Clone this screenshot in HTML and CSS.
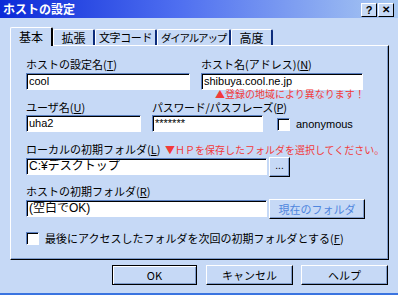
FILE: index.html
```html
<!DOCTYPE html>
<html lang="ja">
<head>
  <meta charset="UTF-8">
  <title>ホストの設定</title>
  <link rel="stylesheet" href="styles.css">
</head>
<body>
  <div class="dialog">
    <div class="titlebar">
      <span class="title">ホストの設定</span>
      <div class="title-buttons">
        <span class="tbtn">?</span>
        <span class="tbtn close">&#10005;</span>
      </div>
    </div>

    <div class="tabs">
      <span class="tab selected">基本</span>
      <span class="tab t-kakuchou">拡張</span>
      <span class="tab t-moji">文字コード</span>
      <span class="tab t-dial">ダイアルアップ</span>
      <span class="tab t-kodo">高度</span>
    </div>

    <div class="panel">
      <div class="row row-host">
        <div class="field f-name">
          <label class="field-label">ホストの設定名(<u>T</u>)</label>
          <div class="field-input">cool</div>
        </div>
        <div class="field f-addr">
          <label class="field-label">ホスト名(アドレス)(<u>N</u>)</label>
          <div class="field-input">shibuya.cool.ne.jp</div>
          <div class="note">▲登録の地域により異なります！</div>
        </div>
      </div>

      <div class="row row-user">
        <div class="field f-user">
          <label class="field-label">ユーザ名(<u>U</u>)</label>
          <div class="field-input">uha2</div>
        </div>
        <div class="field f-pass">
          <label class="field-label">パスワード/パスフレーズ(<u>P</u>)</label>
          <div class="field-input">*******</div>
        </div>
        <div class="check anon">
          <span class="box"></span>
          <span class="check-text">anonymous</span>
        </div>
      </div>

      <div class="field f-local">
        <label class="field-label">ローカルの初期フォルダ(<u>L</u>) <span class="note inline">▼ＨＰを保存したフォルダを選択してください。</span></label>
        <div class="input-line">
          <div class="field-input wide">C:¥デスクトップ</div>
          <span class="btn small">...</span>
        </div>
      </div>

      <div class="field f-remote">
        <label class="field-label">ホストの初期フォルダ(<u>R</u>)</label>
        <div class="input-line">
          <div class="field-input wide">(空白でOK)</div>
          <span class="btn current disabled">現在のフォルダ</span>
        </div>
      </div>

      <div class="check last">
        <span class="box"></span>
        <span class="check-text">最後にアクセスしたフォルダを次回の初期フォルダとする(<u>F</u>)</span>
      </div>
    </div>

    <div class="actions">
      <span class="btn act default">OK</span>
      <span class="btn act">キャンセル</span>
      <span class="btn act">ヘルプ</span>
    </div>
  </div>
</body>
</html>
```

FILE: styles.css
```css
html, body {
  margin: 0;
  padding: 0;
  background: #c6d9f6;
}
body {
  font-family: "Noto Sans CJK JP", sans-serif;
  font-size: 11px;
  color: #000;
}
.dialog {
  width: 398px;
  height: 295px;
  box-sizing: border-box;
  background: #c6d9f6;
  border-bottom: 2px solid #3a74e0;
  overflow: hidden;
}
.titlebar {
  height: 18px;
  display: flex;
  align-items: center;
  justify-content: space-between;
  padding: 0 4px 0 3px;
  background: linear-gradient(to right, #0b2ad8 0%, #4f6ff0 45%, #a9c9f2 100%);
}
.title {
  color: #fff;
  font-weight: bold;
  font-size: 12px;
  line-height: 18px;
}
.title-buttons {
  display: flex;
  gap: 1px;
  margin-top: 1px;
}
.tbtn {
  width: 14px;
  height: 12px;
  background: #c6d9f6;
  border: 1px solid;
  border-color: #fff #000 #000 #fff;
  font-family: "Liberation Sans", sans-serif;
  font-weight: bold;
  font-size: 11px;
  line-height: 12px;
  text-align: center;
}
.tbtn.close {
  font-size: 10px;
}
.tabs {
  display: flex;
  align-items: flex-end;
  height: 19px;
  margin-top: 8px;
  padding-left: 10px;
  position: relative;
  z-index: 1;
}
.tab {
  height: 15px;
  box-sizing: content-box;
  border-left: 1px solid #fff;
  border-top: 1px solid #fff;
  border-right: 2px solid #0c2c7c;
  border-radius: 2px 2px 0 0;
  font-size: 11px;
  line-height: 15px;
  text-align: center;
  white-space: nowrap;
  overflow: hidden;
}
.tab.selected {
  width: 40px;
  height: 18px;
  line-height: 17px;
  font-size: 12px;
  background: #c6d9f6;
  border-right-color: #000;
  margin-bottom: -1px;
}
.t-kakuchou { width: 39px; font-size: 12px; }
.t-moji { width: 59px; letter-spacing: -0.4px; }
.t-dial { width: 71px; font-size: 10.5px; letter-spacing: -1.2px; }
.t-kodo { width: 39px; font-size: 12px; }
.panel {
  height: 215px;
  box-sizing: border-box;
  margin: 0 9px 0 10px;
  border-left: 1px solid #fff;
  border-top: 1px solid #fff;
  border-right: 1px solid #000;
  border-bottom: 1px solid #000;
  box-shadow: inset -1px -1px 0 #7f9ccc;
  padding: 12px 0 0 15px;
}
.row {
  display: flex;
}
.field-label {
  display: block;
  height: 14px;
  line-height: 12px;
  white-space: nowrap;
}
.field-label u {
  text-decoration: underline;
}
.field-input {
  height: 17px;
  box-sizing: border-box;
  background: #fff;
  border: 1px solid;
  border-color: #5a7fc0 #fff #fff #5a7fc0;
  box-shadow: inset 1px 1px 0 #000;
  padding: 0 2px;
  font-family: "Liberation Sans", "Noto Sans CJK JP", sans-serif;
  font-size: 11px;
  line-height: 15px;
  white-space: nowrap;
}
.row-host .field-label {
  height: 15px;
}
.f-name { width: 164px; margin-right: 11px; }
.f-addr { width: 162px; }
.note {
  color: #f23a3a;
  font-size: 10px;
  line-height: 10px;
  height: 11px;
  padding-left: 14px;
  white-space: nowrap;
}
.f-addr .note {
  margin-top: -1px;
  height: 12px;
}
.note.inline {
  padding-left: 2px;
}
.f-user { width: 115px; margin-right: 11px; }
.f-pass { width: 111px; margin-right: 14px; }
.f-pass .field-label {
  letter-spacing: -0.3px;
}
.check {
  display: flex;
  align-items: center;
}
.box {
  width: 13px;
  height: 13px;
  box-sizing: border-box;
  background: #fff;
  border: 1px solid;
  border-color: #5a7fc0 #fff #fff #5a7fc0;
  box-shadow: inset 1px 1px 0 #000;
}
.check-text {
  margin-left: 6px;
  line-height: 13px;
}
.anon {
  align-self: flex-start;
  margin-top: 17px;
}
.anon .check-text {
  font-family: "Liberation Sans", sans-serif;
  font-size: 11px;
}
.f-local {
  margin-top: 11px;
}
.input-line {
  display: flex;
  align-items: flex-start;
  gap: 2px;
}
.field-input.wide {
  width: 241px;
  margin-top: 1px;
  font-size: 12px;
}
.btn {
  box-sizing: border-box;
  background: #c6d9f6;
  border: 1px solid;
  border-color: #fff #000 #000 #fff;
  box-shadow: inset -1px -1px 0 #7f9ccc;
  text-align: center;
  white-space: nowrap;
}
.btn.small {
  width: 21px;
  height: 20px;
  line-height: 16px;
  font-family: "Liberation Sans", sans-serif;
  font-size: 10px;
}
.f-remote {
  margin-top: 8px;
}
.btn.current {
  width: 96px;
  height: 20px;
  line-height: 18px;
  font-size: 11px;
  color: #4f86de;
}
.last {
  margin-top: 13px;
}
.actions {
  display: flex;
  margin: 5px 0 0 112px;
}
.btn.act {
  width: 87px;
  height: 20px;
  line-height: 18px;
  font-size: 11px;
  margin-right: 8px;
}
.btn.act.default {
  width: 85px;
  border: 1px solid #000;
  box-shadow: inset 1px 1px 0 #fff, inset -1px -1px 0 #7f9ccc;
  margin-right: 9px;
}
```
